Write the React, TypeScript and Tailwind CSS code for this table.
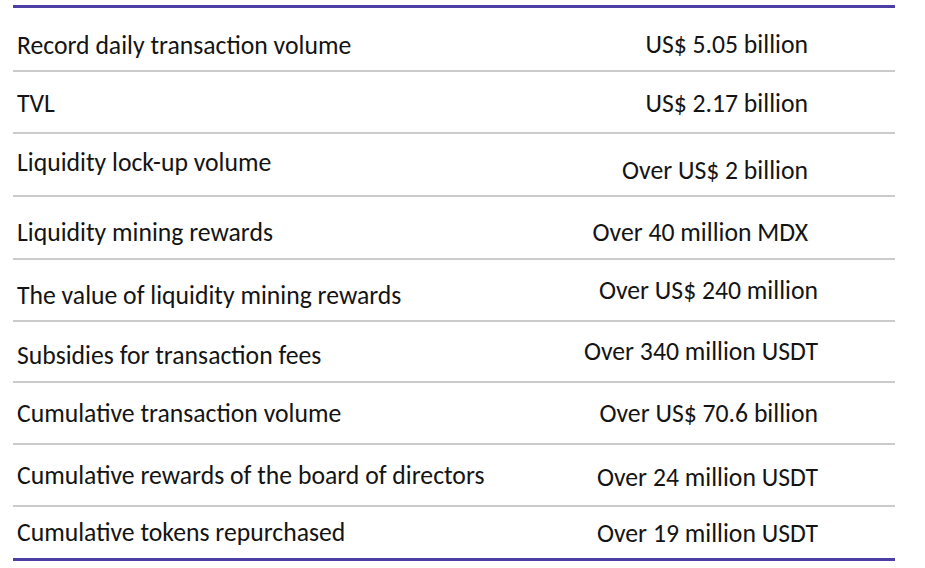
const rows = [
  { label: "Record daily transaction volume", value: "US$ 5.05 billion", h: "h-[64px]", lt: "pt-[25px]", rt: "pt-[24px]", pr: "pr-[87px]" },
  { label: "TVL", value: "US$ 2.17 billion", h: "h-[62px]", lt: "pt-[19px]", rt: "pt-[19px]", pr: "pr-[87px]" },
  { label: "Liquidity lock-up volume", value: "Over US$ 2 billion", h: "h-[63px]", lt: "pt-[16px]", rt: "pt-[24px]", pr: "pr-[87px]" },
  { label: "Liquidity mining rewards", value: "Over 40 million MDX", h: "h-[63px]", lt: "pt-[23px]", rt: "pt-[23px]", pr: "pr-[87px]" },
  { label: "The value of liquidity mining rewards", value: "Over US$ 240 million", h: "h-[62px]", lt: "pt-[23px]", rt: "pt-[18px]", pr: "pr-[77px]" },
  { label: "Subsidies for transaction fees", value: "Over 340 million USDT", h: "h-[61px]", lt: "pt-[21px]", rt: "pt-[17px]", pr: "pr-[77px]" },
  { label: "Cumulative transaction volume", value: "Over US$ 70.6 billion", h: "h-[62px]", lt: "pt-[18px]", rt: "pt-[18px]", pr: "pr-[77px]" },
  { label: "Cumulative rewards of the board of directors", value: "Over 24 million USDT", h: "h-[62px]", lt: "pt-[18px]", rt: "pt-[20px]", pr: "pr-[77px]" },
  { label: "Cumulative tokens repurchased", value: "Over 19 million USDT", h: "h-[54px]", lt: "pt-[13px]", rt: "pt-[14px]", pr: "pr-[77px]" },
];

export default function App() {
  return (
    <div className="h-[568px] w-[925px] bg-white pl-[13px] pt-[5px] font-['Carlito','Lato',sans-serif] text-[#141414]">
      <div className="w-[882px] border-t-[3px] border-[#4b3fa5]">
        {rows.map((row, i) => (
          <div
            key={row.label}
            className={`flex justify-between ${row.h} ${
              i === rows.length - 1 ? "border-b-[3px] border-[#4b3fa5]" : "border-b-2 border-[#cbcbcb]"
            }`}
          >
            <div className={`pl-[4px] text-[25.7px] leading-none ${row.lt}`}>{row.label}</div>
            <div className={`text-[25.7px] leading-none ${row.rt} ${row.pr}`}>{row.value}</div>
          </div>
        ))}
      </div>
    </div>
  );
}
